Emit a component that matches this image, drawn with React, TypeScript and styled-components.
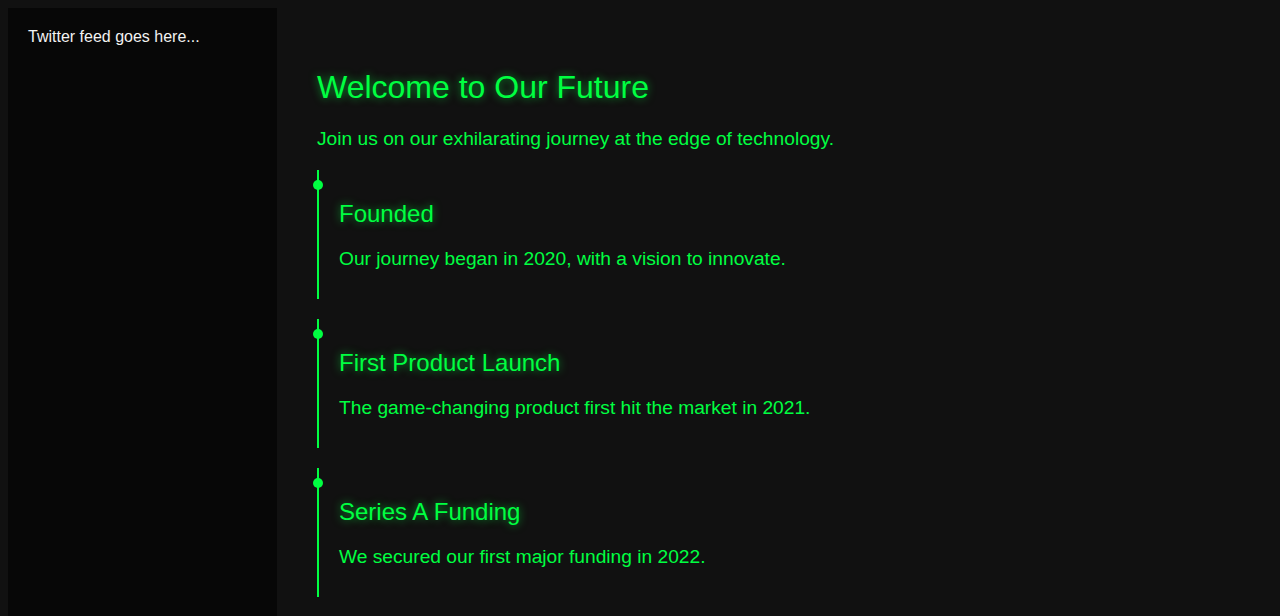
import React from "react";
import styled, { createGlobalStyle } from "styled-components";

const GREEN = "#00ff41";

const GlobalStyle = createGlobalStyle`
  body {
    margin: 8px;
    background: #111111;
    font-family: "Liberation Sans", Arial, sans-serif;
    color: ${GREEN};
  }
`;

const Layout = styled.div`
  display: flex;
  align-items: stretch;
  min-height: 608px;
`;

const Sidebar = styled.aside`
  flex: 0 0 269px;
  box-sizing: border-box;
  padding: 20px;
  background: #070707;
  color: #f2f2f2;
  font-size: 16px;
`;

const Main = styled.main`
  flex: 1;
  padding: 40px;
`;

const Title = styled.h1`
  font-size: 32px;
  font-weight: normal;
  margin: 21px 0 22px;
  color: ${GREEN};
  text-shadow: 0 0 8px rgba(0, 255, 65, 0.6);
`;

const Lead = styled.p`
  font-size: 19.2px;
  margin: 0 0 20px;
  color: ${GREEN};
`;

const Timeline = styled.div`
  display: flex;
  flex-direction: column;
  gap: 20px;
`;

const Item = styled.section`
  position: relative;
  border-left: 2px solid ${GREEN};
  padding: 10px 0 10px 20px;
`;

const Dot = styled.span`
  position: absolute;
  left: -6px;
  top: 10px;
  width: 10px;
  height: 10px;
  border-radius: 50%;
  background: ${GREEN};
`;

const ItemTitle = styled.h3`
  font-size: 24px;
  font-weight: normal;
  margin: 20px 0;
  color: ${GREEN};
  text-shadow: 0 0 8px rgba(0, 255, 65, 0.6);
`;

const ItemText = styled.p`
  font-size: 19.2px;
  margin: 0 0 19px;
  color: ${GREEN};
`;

const events = [
  { title: "Founded", text: "Our journey began in 2020, with a vision to innovate." },
  { title: "First Product Launch", text: "The game-changing product first hit the market in 2021." },
  { title: "Series A Funding", text: "We secured our first major funding in 2022." },
];

export default function App() {
  return (
    <>
      <GlobalStyle />
      <Layout>
        <Sidebar>Twitter feed goes here...</Sidebar>
        <Main>
          <Title>Welcome to Our Future</Title>
          <Lead>Join us on our exhilarating journey at the edge of technology.</Lead>
          <Timeline>
            {events.map((e) => (
              <Item key={e.title}>
                <Dot />
                <ItemTitle>{e.title}</ItemTitle>
                <ItemText>{e.text}</ItemText>
              </Item>
            ))}
          </Timeline>
        </Main>
      </Layout>
    </>
  );
}
